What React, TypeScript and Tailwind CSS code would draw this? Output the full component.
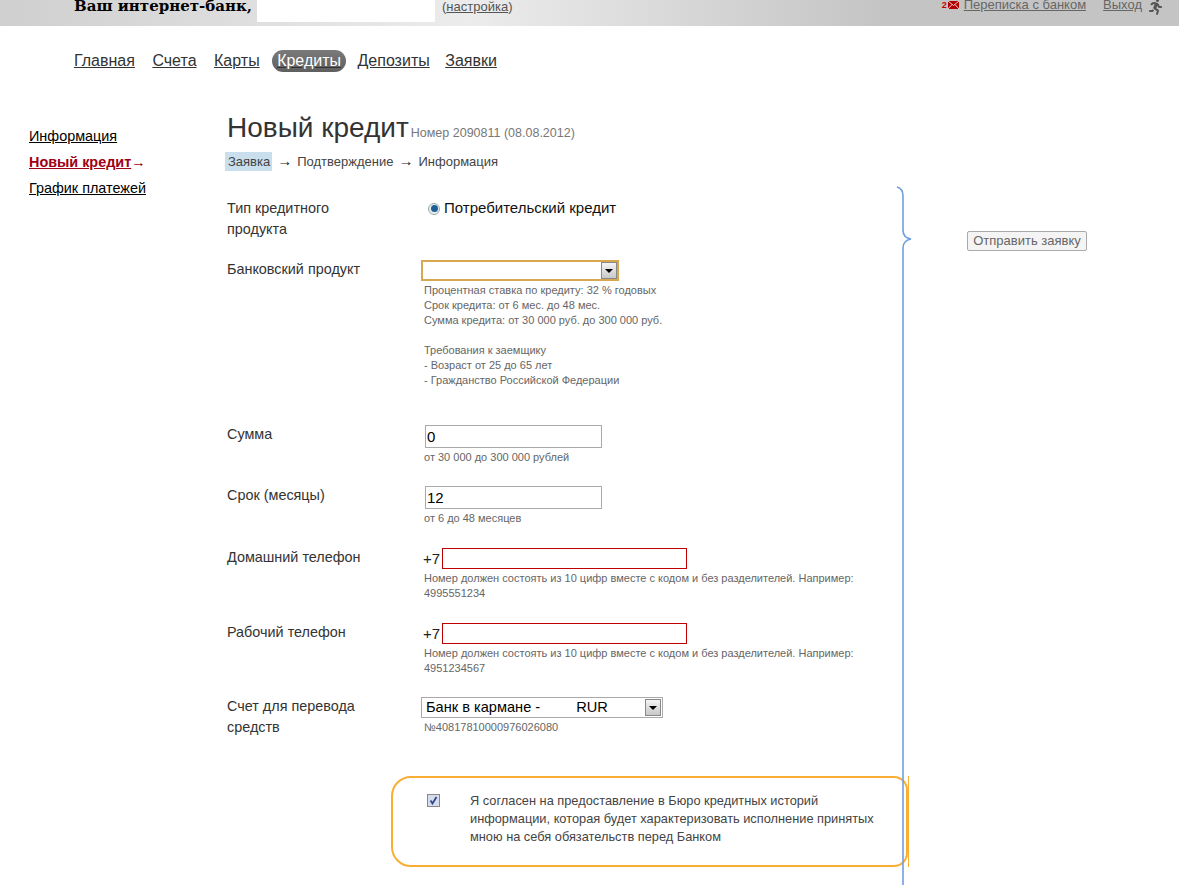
import React from "react";
import { FaRunning } from "react-icons/fa";

function Arrow() {
  return (
    <span className="ml-auto flex h-[17px] w-[16px] items-center justify-center border border-[#888] bg-gradient-to-b from-[#f4f4f4] to-[#c8c8c8]">
      <span className="h-0 w-0 border-x-[4px] border-t-[4px] border-x-transparent border-t-black" />
    </span>
  );
}

function Help({ children, className = "" }: { children: React.ReactNode; className?: string }) {
  return <div className={`ml-[3px] text-[11px] leading-[15px] text-[#666] ${className}`}>{children}</div>;
}

function Row({ label, mt, children }: { label: React.ReactNode; mt: string; children: React.ReactNode }) {
  return (
    <div className={`flex ${mt}`}>
      <div className="w-[194px] shrink-0 text-[14.4px] leading-[21px] text-[#333]">{label}</div>
      <div className="flex-1">{children}</div>
    </div>
  );
}

function Phone({ sample }: { sample: string }) {
  return (
    <>
      <div className="mt-[1px] ml-[2px] flex items-center">
        <span className="w-[19px] text-[15px] leading-[21px] text-[#222]">+7</span>
        <input readOnly className="h-[21px] w-[245px] border border-[#c00000] bg-white outline-none" />
      </div>
      <Help className="mt-[2px] w-[440px]">
        Номер должен состоять из 10 цифр вместе с кодом и без разделителей. Например: {sample}
      </Help>
    </>
  );
}

export default function App() {
  return (
    <div className="relative h-[885px] w-[1179px] overflow-hidden bg-white font-['Liberation_Sans',Arial,sans-serif]">
      <header className="flex h-[26px] items-start overflow-hidden bg-gradient-to-r from-[#cfcfcf] via-[#ececec] via-40% to-[#c4c4c4] to-75% pl-[74px]">
        <span className="-mt-[3px] font-['DejaVu_Serif',serif] text-[15px] font-bold leading-[18px] text-black">
          Ваш интернет-банк,
        </span>
        <span className="-mt-[2px] ml-[5px] h-[24px] w-[178px] bg-white" />
        <span className="-mt-[1px] ml-[7px] text-[13px] leading-[16px] text-[#555]">
          (<span className="underline">настройка</span>)
        </span>
        <div className="-mt-[3px] ml-auto flex items-start pr-[15px] text-[13px] leading-[16px] text-[#666]">
          <span className="mr-[1px] text-[9px] font-bold leading-[16px] text-[#c00000]">2</span>
          <svg width="11" height="8" viewBox="0 0 11 8" className="mt-[4px] mr-[5px]">
            <rect width="11" height="8" fill="#b00000" />
            <path d="M0 0l5.5 4.5L11 0M0 8l4-4.5M11 8L7 3.5" stroke="#fff" strokeWidth="0.8" fill="none" />
          </svg>
          <span className="underline">Переписка с банком</span>
          <span className="ml-[17px] underline">Выход</span>
          <FaRunning className="ml-[5px] mt-[2px] h-[16px] w-[17px] text-[#555]" />
        </div>
      </header>

      <nav className="mt-[24px] flex h-[22px] items-center gap-[17.5px] pl-[74px] text-[16px] leading-[22px] text-[#333] underline">
        <span>Главная</span>
        <span>Счета</span>
        <span>Карты</span>
        <span className="-ml-[5px] -mr-[6px] rounded-[11px] bg-gradient-to-b from-[#7a7a7a] to-[#5f5f5f] px-[5px] text-white">Кредиты</span>
        <span className="-mr-[2px]">Депозиты</span>
        <span>Заявки</span>
      </nav>

      <div className="mt-[45px] flex">
        <aside className="w-[227px] shrink-0 pl-[29px] pt-[6px] text-[14.4px] leading-[26px] text-black">
          <div className="underline">Информация</div>
          <div className="font-bold text-[#a00014]">
            <span className="underline">Новый кредит</span>
            <span className="font-normal">→</span>
          </div>
          <div className="underline">График платежей</div>
        </aside>

        <main className="w-[680px] shrink-0">
          <div className="-mt-[5px] flex h-[34px] items-baseline">
            <h1 className="text-[28px] leading-[32px] text-[#333]">Новый кредит</h1>
            <span className="ml-[2px] text-[12.5px] text-[#777]">Номер 2090811 (08.08.2012)</span>
          </div>
          <div className="mt-[6px] flex h-[19px] items-center text-[13px] text-[#444]">
            <span className="-ml-[2px] flex h-[19px] items-center bg-[#c9dfee] pl-[3px] pr-[2px]">Заявка</span>
            <span className="mx-[5px] text-[15px] text-[#222]">→</span>
            <span>Подтверждение</span>
            <span className="mx-[5px] text-[15px] text-[#222]">→</span>
            <span>Информация</span>
          </div>

          <Row label={<>Тип кредитного<br />продукта</>} mt="mt-[27px]">
            <div className="flex h-[21px] items-center pl-[7px] text-[15px] text-[#111]">
              <span className="mr-[4px] flex h-[12px] w-[12px] items-center justify-center rounded-full border border-[#9aa] bg-[#e8eef2]">
                <span className="h-[7px] w-[7px] rounded-full bg-[#1f5f96]" />
              </span>
              Потребительский кредит
            </div>
          </Row>

          <Row label="Банковский продукт" mt="mt-[19px]">
            <div className="mt-[1px] flex h-[21px] w-[198px] items-center border-2 border-[#d8a850] bg-white">
              <Arrow />
            </div>
            <Help className="mt-[2px]">
              Процентная ставка по кредиту: 32 % годовых<br />
              Срок кредита: от 6 мес. до 48 мес.<br />
              Сумма кредита: от 30 000 руб. до 300 000 руб.<br />
              <br />
              Требования к заемщику<br />
              - Возраст от 25 до 65 лет<br />
              - Гражданство Российской Федерации
            </Help>
          </Row>

          <Row label="Сумма" mt="mt-[36px]">
            <input
              readOnly
              defaultValue="0"
              className="mt-[1px] ml-[4px] block h-[23px] w-[177px] border border-[#aaa] bg-white px-[1px] text-[15px] text-black outline-none"
            />
            <Help className="mt-[2px]">от 30 000 до 300 000 рублей</Help>
          </Row>

          <Row label="Срок (месяцы)" mt="mt-[20px]">
            <input
              readOnly
              defaultValue="12"
              className="mt-[1px] ml-[4px] block h-[23px] w-[177px] border border-[#aaa] bg-white px-[1px] text-[15px] text-black outline-none"
            />
            <Help className="mt-[2px]">от 6 до 48 месяцев</Help>
          </Row>

          <Row label="Домашний телефон" mt="mt-[21px]">
            <Phone sample="4995551234" />
          </Row>

          <Row label="Рабочий телефон" mt="mt-[21px]">
            <Phone sample="4951234567" />
          </Row>

          <Row label={<>Счет для перевода<br />средств</>} mt="mt-[20px]">
            <div className="mt-[1px] flex h-[21px] w-[242px] items-center border border-[#aaa] bg-white pl-[4px] pr-[1px] text-[14.6px] text-black">
              <span>Банк в кармане -</span>
              <span className="ml-[36px]">RUR</span>
              <Arrow />
            </div>
            <Help className="mt-[2px]">№40817810000976026080</Help>
          </Row>

          <div className="mt-[38px] ml-[164px] flex h-[91px] w-[517px] rounded-l-[20px] rounded-r-[14px] border-2 border-[#fbae34] pl-[34px] pt-[16px]">
            <span className="flex h-[13px] w-[13px] shrink-0 items-center justify-center border border-[#888] bg-[#d5dcec]">
              <svg width="9" height="9" viewBox="0 0 9 9">
                <path d="M1.5 4.5L3.5 7.5L7.5 1" stroke="#34488c" strokeWidth="1.8" fill="none" />
              </svg>
            </span>
            <p className="ml-[30px] -mt-[2px] whitespace-nowrap text-[12.8px] leading-[18px] text-[#444]">
              Я согласен на предоставление в Бюро кредитных историй<br />
              информации, которая будет характеризовать исполнение принятых<br />
              мною на себя обязательств перед Банком
            </p>
          </div>
        </main>

        <div className="ml-[60px] pt-[114px]">
          <button className="flex h-[20px] w-[120px] items-center justify-center rounded-[2px] border border-[#aaa] bg-[#f4f4f4] text-[13px] text-[#666]">
            Отправить заявку
          </button>
        </div>
      </div>

      <svg className="pointer-events-none absolute left-[890px] top-[180px]" width="30" height="705" viewBox="0 0 30 705">
        <path
          d="M7 7C11 8 13 11 13 16V50C13 55 15 58 21 59C15 60 13 63 13 68V705"
          fill="none"
          stroke="#6f9fe0"
          strokeWidth="1.6"
        />
      </svg>
      <div className="pointer-events-none absolute left-[908px] top-[776px] h-[91px] w-px bg-[#fbae34]" />
    </div>
  );
}
